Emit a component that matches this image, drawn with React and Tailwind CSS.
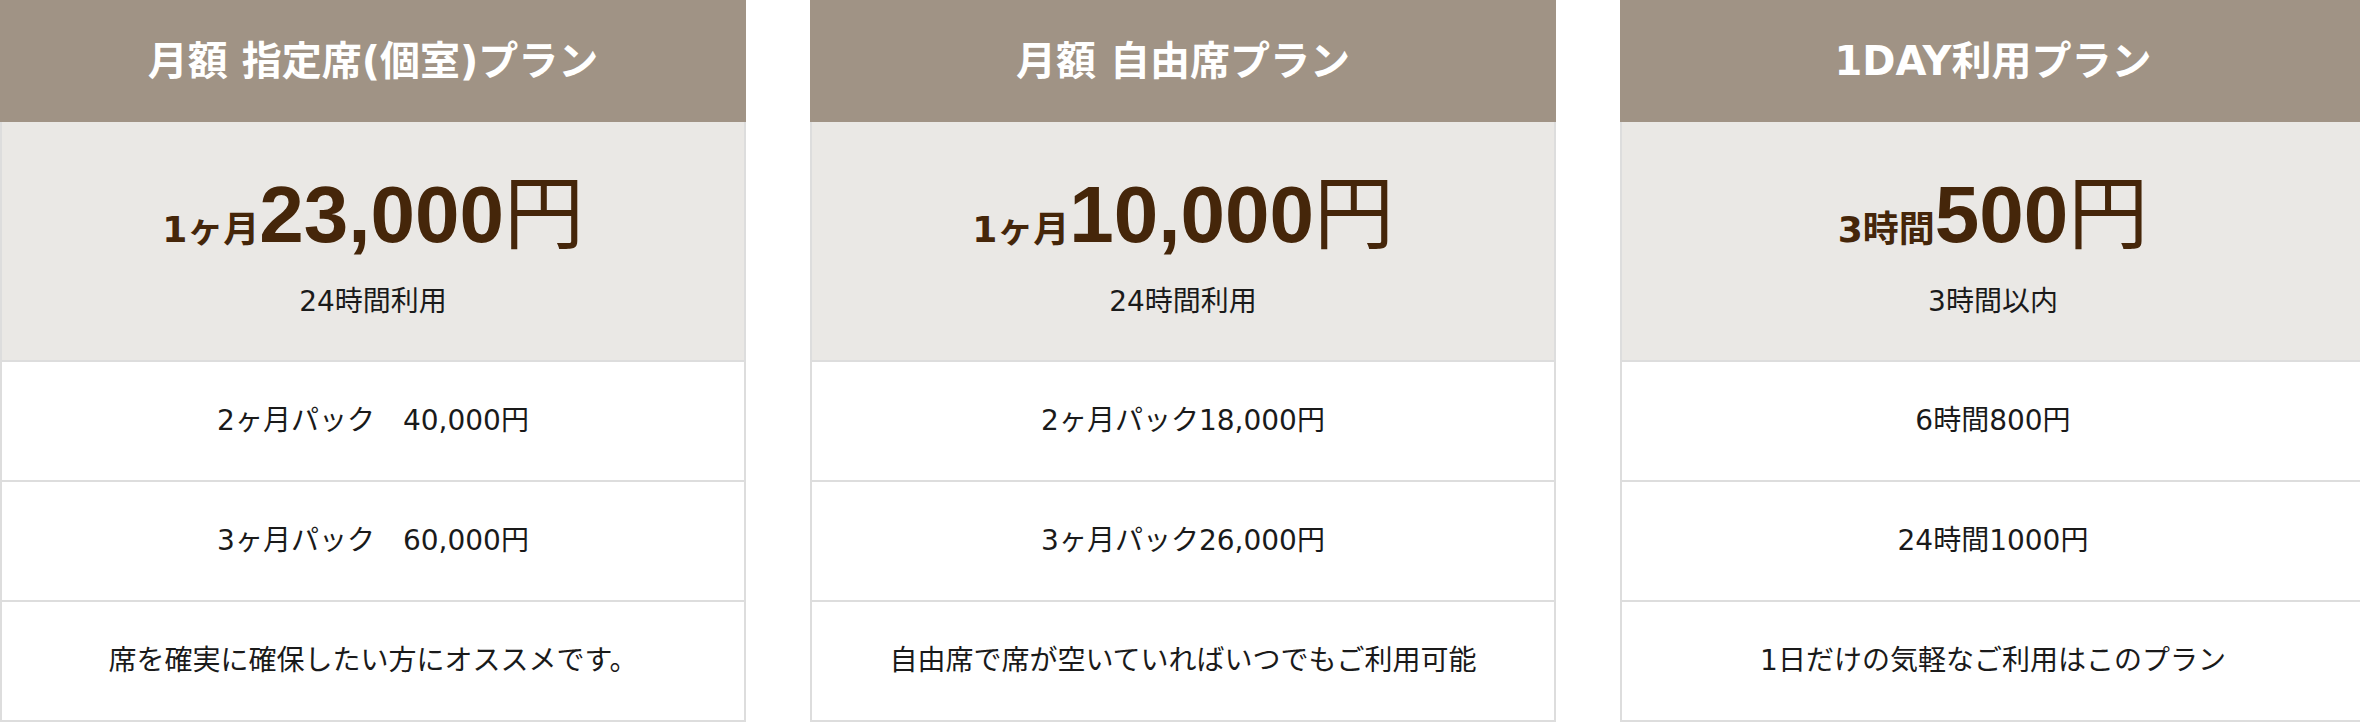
const cards = [
  {
    title: "月額 指定席(個室)プラン",
    prefix: "1ヶ月",
    amount: "23,000",
    sub: "24時間利用",
    rows: ["2ヶ月パック\u300040,000円", "3ヶ月パック\u300060,000円", "席を確実に確保したい方にオススメです。"],
  },
  {
    title: "月額 自由席プラン",
    prefix: "1ヶ月",
    amount: "10,000",
    sub: "24時間利用",
    rows: ["2ヶ月パック18,000円", "3ヶ月パック26,000円", "自由席で席が空いていればいつでもご利用可能"],
  },
  {
    title: "1DAY利用プラン",
    prefix: "3時間",
    amount: "500",
    sub: "3時間以内",
    rows: ["6時間800円", "24時間1000円", "1日だけの気軽なご利用はこのプラン"],
  },
];

function Card({ card }) {
  return (
    <div className="w-[746px] shrink-0 flex flex-col">
      <div className="h-[122px] bg-[#a09385] flex items-center justify-center text-white text-[40px] font-bold leading-none">
        {card.title}
      </div>
      <div className="h-[238px] bg-[#eae8e5] border-x-2 border-[#dddddd] flex flex-col items-center justify-center">
        <div className="flex items-baseline text-[#45260a] h-[80px] leading-none">
          <span className="text-[36px] font-bold">{card.prefix}</span>
          <span className="text-[80px] font-bold font-['Liberation_Sans','Noto_Sans_CJK_JP',sans-serif]">{card.amount}</span>
          <span className="text-[80px] font-normal font-['Noto_Sans_CJK_JP',sans-serif]">円</span>
        </div>
        <div className="mt-[41px] text-[28px] leading-[28px] text-[#1a1a1a]">{card.sub}</div>
      </div>
      {card.rows.map((r, i) => (
        <div
          key={i}
          className={
            i === 2
              ? "h-[122px] border-2 border-[#dddddd] flex items-center justify-center text-[28px] text-[#1a1a1a] whitespace-pre"
              : "h-[120px] border-t-2 border-x-2 border-[#dddddd] flex items-center justify-center text-[28px] text-[#1a1a1a] whitespace-pre"
          }
        >
          {r}
        </div>
      ))}
    </div>
  );
}

export default function App() {
  return (
    <div className="w-full overflow-hidden bg-white font-['DejaVu_Sans','Noto_Sans_CJK_JP',sans-serif]">
      <div className="flex w-[2366px] gap-[64px]">
        {cards.map((c, i) => (
          <Card key={i} card={c} />
        ))}
      </div>
    </div>
  );
}
